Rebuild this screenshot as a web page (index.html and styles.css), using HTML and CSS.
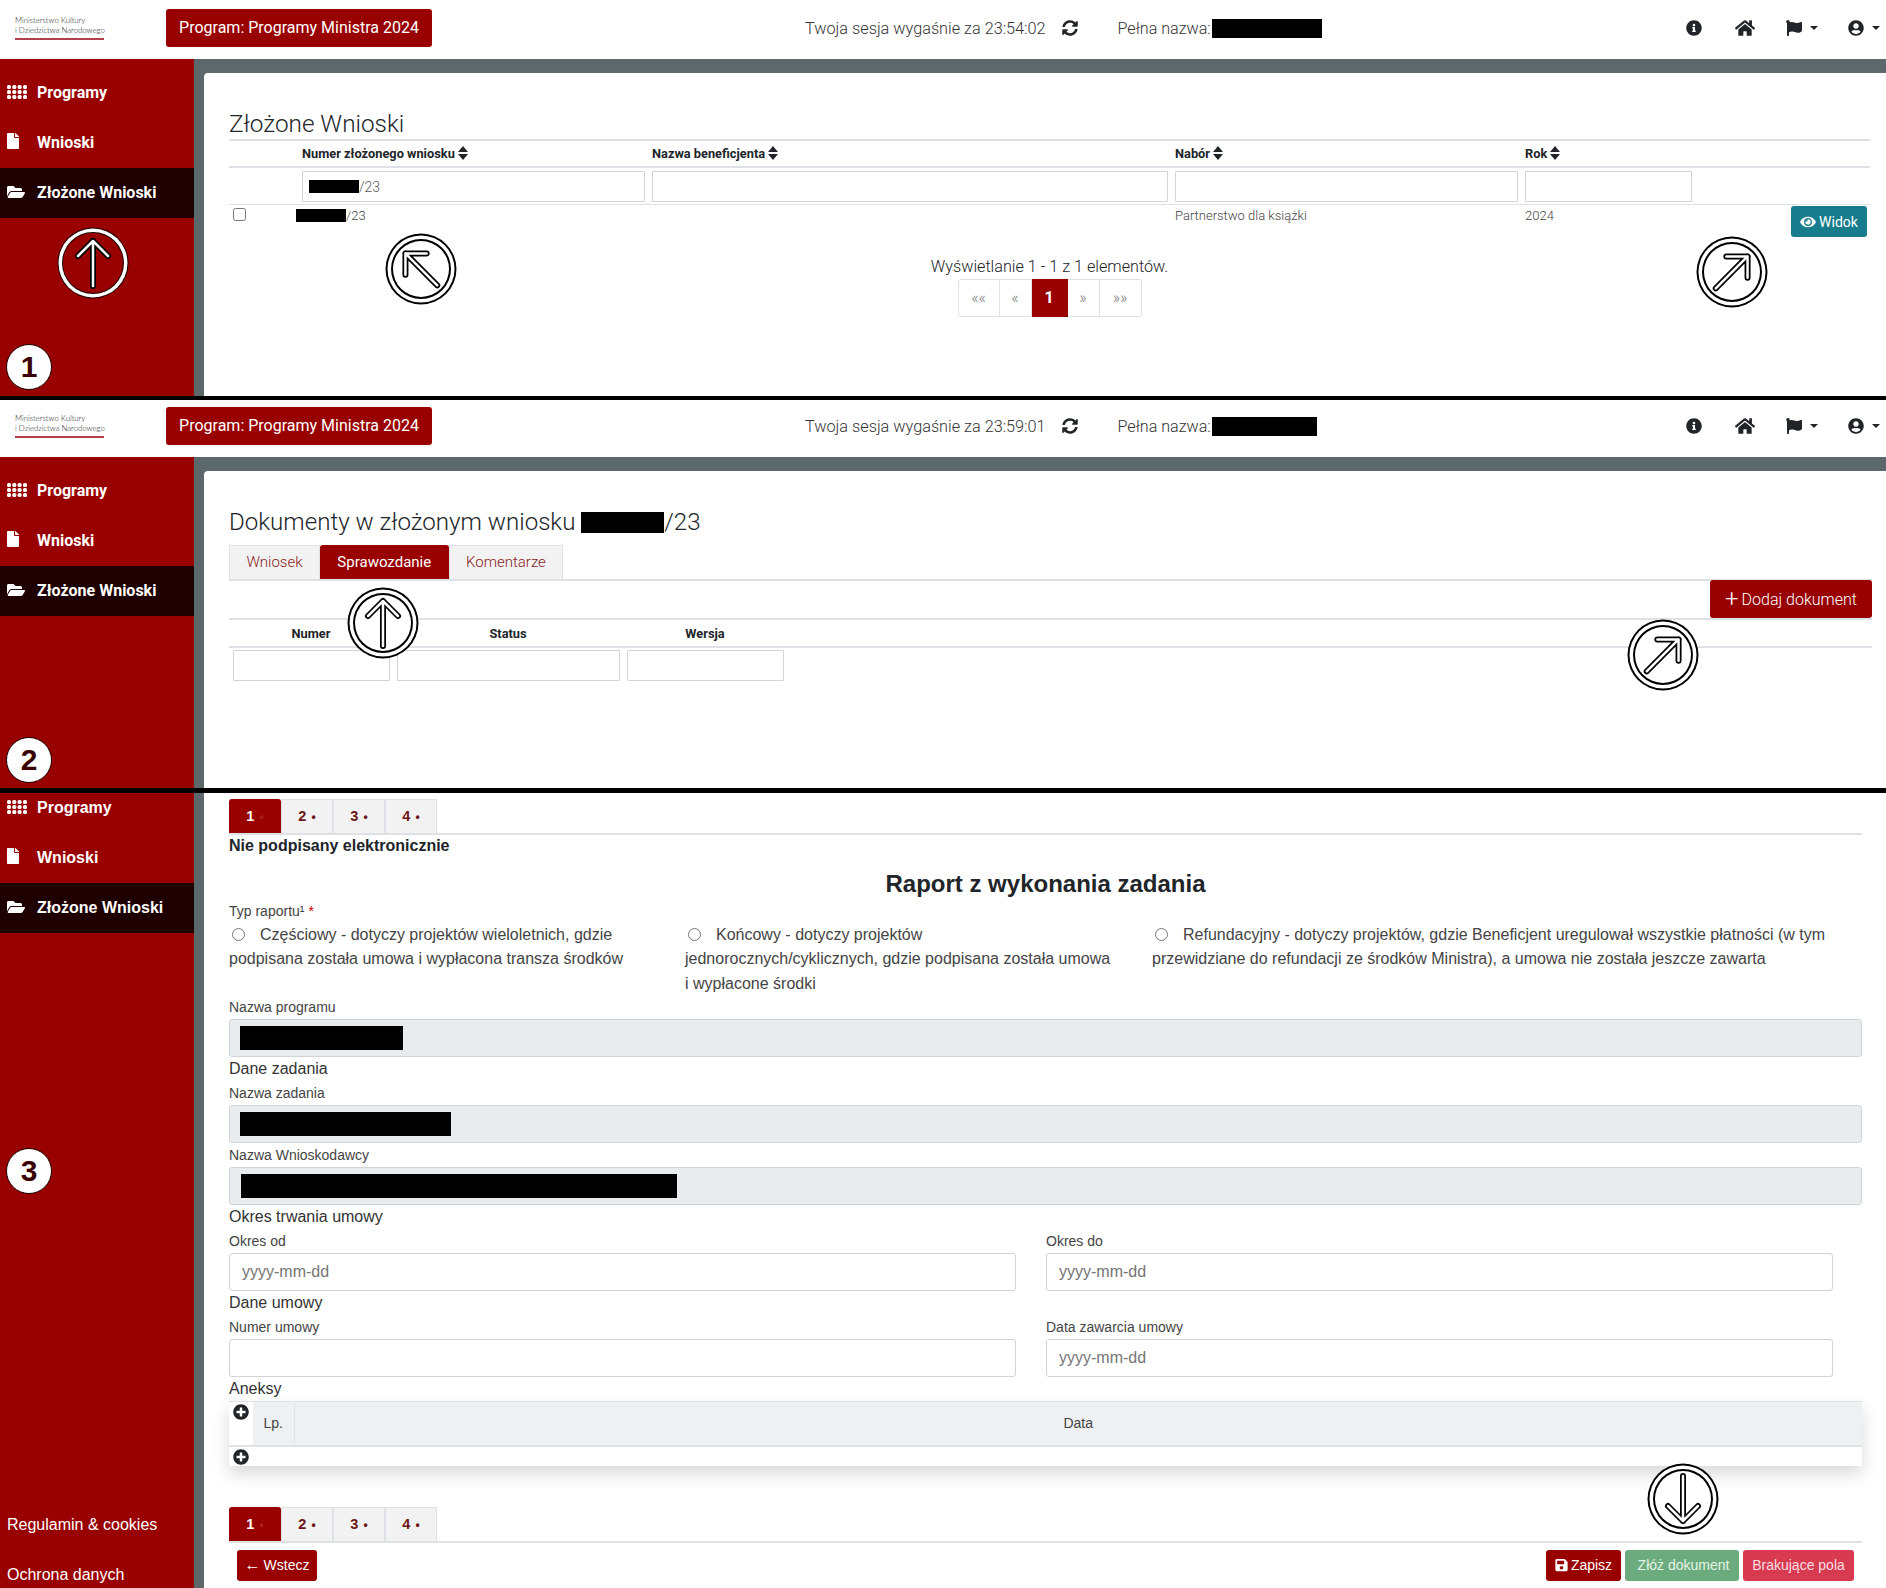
FILE: index.html
```html
<!DOCTYPE html>
<html lang="pl">
  <head>
    <meta charset="UTF-8" />
    <meta name="viewport" content="width=device-width, initial-scale=1.0" />
    <title>Złożone Wnioski</title>
    <link rel="stylesheet" href="styles.css">
  </head>
  <body>
    <svg class="icon-defs" aria-hidden="true">
      <symbol id="i-grid" viewBox="0 0 20 14">
        <g fill="currentColor">
          <rect x="0" y="0" width="4" height="4" rx="1.500" /><rect x="5.300" y="0" width="4" height="4" rx="1.500" /><rect x="10.600" y="0" width="4" height="4" rx="1.500" /><rect x="16" y="0" width="4" height="4" rx="1.500" />
          <rect x="0" y="5" width="4" height="4" rx="1.500" /><rect x="5.300" y="5" width="4" height="4" rx="1.500" /><rect x="10.600" y="5" width="4" height="4" rx="1.500" /><rect x="16" y="5" width="4" height="4" rx="1.500" />
          <rect x="0" y="10" width="4" height="4" rx="1.500" /><rect x="5.300" y="10" width="4" height="4" rx="1.500" /><rect x="10.600" y="10" width="4" height="4" rx="1.500" /><rect x="16" y="10" width="4" height="4" rx="1.500" />
        </g>
      </symbol>
      <symbol id="i-file" viewBox="0 0 384 512">
        <path fill="currentColor" d="M224 136V0H24C10.700 0 0 10.700 0 24v464c0 13.300 10.700 24 24 24h336c13.300 0 24-10.700 24-24V160H248c-13.200 0-24-10.800-24-24zm160-14.100v6.100H256V0h6.100c6.400 0 12.500 2.500 17 7l97.900 98c4.500 4.500 7 10.600 7 16.900z" />
      </symbol>
      <symbol id="i-folder" viewBox="0 0 576 512">
        <path fill="currentColor" d="M572.694 292.093L500.270 416.248A63.997 63.997 0 0 1 444.989 448H45.025c-18.523 0-30.064-20.093-20.731-36.093l72.424-124.155A64 64 0 0 1 152 256h399.964c18.523 0 30.064 20.093 20.730 36.093zM152 224h328v-48c0-26.510-21.490-48-48-48H272l-64-64H48C21.490 64 0 85.490 0 112v278.046l69.077-118.418C86.214 242.250 117.989 224 152 224z" />
      </symbol>
      <symbol id="i-sort" viewBox="0 0 10 14">
        <path fill="currentColor" d="M5 0l5 6H0zM5 14l-5-6h10z" />
      </symbol>
      <symbol id="i-sync" viewBox="0 0 512 512">
        <path fill="currentColor" d="M370.720 133.280C339.458 104.008 298.888 87.962 255.848 88c-77.458.068-144.328 53.178-162.791 126.850-1.344 5.363-6.122 9.150-11.651 9.150H24.103c-7.498 0-13.194-6.807-11.807-14.176C33.933 94.924 134.813 8 256 8c66.448 0 126.791 26.136 171.315 68.685L463.030 40.970C478.149 25.851 504 36.559 504 57.941V192c0 13.255-10.745 24-24 24H345.941c-21.382 0-32.090-25.851-16.971-40.971l41.750-41.749zM32 296h134.059c21.382 0 32.090 25.851 16.971 40.971l-41.750 41.750c31.262 29.273 71.835 45.319 114.876 45.280 77.418-.07 144.315-53.144 162.787-126.849 1.344-5.363 6.122-9.150 11.651-9.150h57.304c7.498 0 13.194 6.807 11.807 14.176C478.067 417.076 377.187 504 256 504c-66.448 0-126.791-26.136-171.315-68.685L48.970 471.030C33.851 486.149 8 475.441 8 454.059V320c0-13.255 10.745-24 24-24z" />
      </symbol>
      <symbol id="i-info" viewBox="0 0 512 512">
        <path fill="currentColor" d="M256 8C119.043 8 8 119.083 8 256c0 136.997 111.043 248 248 248s248-111.003 248-248C504 119.083 392.957 8 256 8zm0 110c23.196 0 42 18.804 42 42s-18.804 42-42 42-42-18.804-42-42 18.804-42 42-42zm56 254c0 6.627-5.373 12-12 12h-88c-6.627 0-12-5.373-12-12v-24c0-6.627 5.373-12 12-12h12v-64h-12c-6.627 0-12-5.373-12-12v-24c0-6.627 5.373-12 12-12h64c6.627 0 12 5.373 12 12v100h12c6.627 0 12 5.373 12 12v24z" />
      </symbol>
      <symbol id="i-home" viewBox="0 0 576 512">
        <path fill="currentColor" d="M280.370 148.260L96 300.110V464a16 16 0 0 0 16 16l112.060-.29a16 16 0 0 0 15.920-16V368a16 16 0 0 1 16-16h64a16 16 0 0 1 16 16v95.640a16 16 0 0 0 16 16.050L464 480a16 16 0 0 0 16-16V300L295.670 148.260a12.190 12.190 0 0 0-15.300 0zM571.600 251.470L488 182.560V44.050a12 12 0 0 0-12-12h-56a12 12 0 0 0-12 12v72.610L318.470 43a48 48 0 0 0-61 0L4.340 251.470a12 12 0 0 0-1.600 16.900l25.500 31A12 12 0 0 0 45.150 301l235.220-193.740a12.190 12.190 0 0 1 15.300 0L530.900 301a12 12 0 0 0 16.900-1.600l25.500-31a12 12 0 0 0-1.700-16.930z" />
      </symbol>
      <symbol id="i-flag" viewBox="0 0 512 512">
        <path fill="currentColor" d="M349.565 98.783C295.978 98.783 251.721 64 184.348 64c-24.955 0-47.309 4.384-68.045 12.013a55.947 55.947 0 0 0 3.586-23.562C118.117 24.015 94.806 1.206 66.338.048 34.345-1.254 8 24.296 8 56c0 19.026 9.497 35.825 24 45.945V488c0 13.255 10.745 24 24 24h16c13.255 0 24-10.745 24-24v-94.400c28.311-12.064 63.582-22.122 114.435-22.122 53.588 0 97.844 34.783 165.217 34.783 48.169 0 86.667-16.294 122.505-40.858C506.840 359.452 512 349.571 512 339.045v-243.100c0-23.393-24.269-38.870-45.485-29.016-34.338 15.948-76.454 31.854-116.950 31.854z" />
      </symbol>
      <symbol id="i-user" viewBox="0 0 496 512">
        <path fill="currentColor" fill-rule="evenodd" d="M248 8C111 8 0 119 0 256s111 248 248 248 248-111 248-248S385 8 248 8zm0 96c48.600 0 88 39.400 88 88s-39.400 88-88 88-88-39.400-88-88 39.400-88 88-88zm0 344c-58.700 0-111.300-26.600-146.500-68.200 18.800-35.400 55.600-59.800 98.500-59.800 2.400 0 4.800.4 7.100 1.100 13 4.200 26.600 6.900 40.900 6.900 14.300 0 28-2.700 40.900-6.900 2.300-.7 4.700-1.100 7.100-1.100 42.900 0 79.700 24.400 98.500 59.800C359.300 421.400 306.700 448 248 448z" />
      </symbol>
      <symbol id="i-eye" viewBox="0 0 576 512">
        <path fill="currentColor" d="M572.520 241.400C518.290 135.590 410.930 64 288 64S57.680 135.640 3.480 241.410a32.350 32.350 0 0 0 0 29.190C57.710 376.410 165.070 448 288 448s230.320-71.640 284.520-177.410a32.350 32.350 0 0 0 0-29.190zM288 400a144 144 0 1 1 144-144 143.930 143.930 0 0 1-144 144zm0-240a95.310 95.310 0 0 0-25.310 3.790 47.850 47.850 0 0 1-66.900 66.900A95.780 95.780 0 1 0 288 160z" />
      </symbol>
      <symbol id="i-save" viewBox="0 0 448 512">
        <path fill="currentColor" d="M433.941 129.941l-83.882-83.882A48 48 0 0 0 316.118 32H48C21.490 32 0 53.490 0 80v352c0 26.510 21.490 48 48 48h352c26.510 0 48-21.490 48-48V163.882a48 48 0 0 0-14.059-33.941zM224 416c-35.346 0-64-28.654-64-64 0-35.346 28.654-64 64-64s64 28.654 64 64c0 35.346-28.654 64-64 64zm96-304.520V212c0 6.627-5.373 12-12 12H76c-6.627 0-12-5.373-12-12V108c0-6.627 5.373-12 12-12h228.520c3.183 0 6.235 1.264 8.485 3.515l3.480 3.480A11.996 11.996 0 0 1 320 111.480z" />
      </symbol>
      <symbol id="i-plus-circle" viewBox="0 0 512 512">
        <path fill="currentColor" d="M256 8C119 8 8 119 8 256s111 248 248 248 248-111 248-248S393 8 256 8zm144 276c0 6.600-5.400 12-12 12h-92v92c0 6.600-5.400 12-12 12h-56c-6.600 0-12-5.400-12-12v-92h-92c-6.600 0-12-5.400-12-12v-56c0-6.600 5.400-12 12-12h92v-92c0-6.600 5.400-12 12-12h56c6.600 0 12 5.400 12 12v92h92c6.600 0 12 5.400 12 12v56z" />
      </symbol>
      <symbol id="i-mark" viewBox="0 0 72 72">
        <path class="mark-edge" d="M36 59V14M21 29l15-15 15 15" />
        <path class="mark-core" d="M36 59V14M21 29l15-15 15 15" />
      </symbol>
    </svg>

    <!-- 1: lista zlozonych wnioskow -->
    <section class="panel panel-one">
      <header class="topbar">
        <div class="logo">
          <div>Ministerstwo Kultury</div>
          <div>i Dziedzictwa Narodowego</div>
        </div>
        <a class="program-btn">Program: Programy Ministra 2024</a>
        <div class="session">Twoja sesja wygaśnie za 23:54:02</div>
        <svg class="sync-icon"><use href="#i-sync" /></svg>
        <div class="username">Pełna nazwa:<span class="redact redact-name"></span></div>
        <nav class="topnav">
          <svg class="nav-icon"><use href="#i-info" /></svg>
          <svg class="nav-icon nav-home"><use href="#i-home" /></svg>
          <svg class="nav-icon nav-flag"><use href="#i-flag" /></svg>
          <span class="caret"></span>
          <svg class="nav-icon nav-user"><use href="#i-user" /></svg>
          <span class="caret"></span>
        </nav>
      </header>
      <div class="panel-body">
        <aside class="sidebar">
          <a class="side-item"><svg class="side-icon"><use href="#i-grid" /></svg>Programy</a>
          <a class="side-item"><svg class="side-icon side-file"><use href="#i-file" /></svg>Wnioski</a>
          <a class="side-item active"><svg class="side-icon side-folder"><use href="#i-folder" /></svg>Złożone Wnioski</a>
        </aside>
        <main class="gutter">
          <div class="card card-list">
            <h1 class="page-title">Złożone Wnioski</h1>
            <table class="grid-table list-table">
              <thead>
                <tr>
                  <th class="col-check"></th>
                  <th class="col-num">Numer złożonego wniosku <svg class="sort-icon"><use href="#i-sort" /></svg></th>
                  <th class="col-name">Nazwa beneficjenta <svg class="sort-icon"><use href="#i-sort" /></svg></th>
                  <th class="col-call">Nabór <svg class="sort-icon"><use href="#i-sort" /></svg></th>
                  <th class="col-year">Rok <svg class="sort-icon"><use href="#i-sort" /></svg></th>
                  <th></th>
                </tr>
              </thead>
              <tbody>
                <tr class="filter-row">
                  <td></td>
                  <td><div class="filter filter-value"><span class="redact redact-num"></span>/23</div></td>
                  <td><div class="filter"></div></td>
                  <td><div class="filter"></div></td>
                  <td><div class="filter"></div></td>
                  <td></td>
                </tr>
                <tr class="data-row">
                  <td><input class="row-check" type="checkbox" /></td>
                  <td><span class="redact redact-num row-num"></span>/23</td>
                  <td></td>
                  <td>Partnerstwo dla książki</td>
                  <td>2024</td>
                  <td class="cell-action"><a class="btn btn-teal"><svg class="btn-icon"><use href="#i-eye" /></svg>Widok</a></td>
                </tr>
              </tbody>
            </table>
            <p class="pager-info">Wyświetlanie 1 - 1 z 1 elementów.</p>
            <div class="pager">
              <a class="pager-item pager-wide">««</a>
              <a class="pager-item">«</a>
              <a class="pager-item current">1</a>
              <a class="pager-item">»</a>
              <a class="pager-item pager-wide">»»</a>
            </div>
          </div>
        </main>
      </div>
      <svg class="mark mark-sidebar mark-1a" viewBox="0 0 72 72">
        <circle cx="36" cy="36" r="35.500" fill="#1a0000" />
        <circle cx="36" cy="36" r="34.500" fill="#fff" />
        <circle cx="36" cy="36" r="31" fill="#1a0000" />
        <circle cx="36" cy="36" r="30" fill="#990000" />
        <use href="#i-mark" />
      </svg>
      <svg class="mark mark-up-left mark-1b" viewBox="0 0 72 72">
        <circle cx="36" cy="36" r="35.500" />
        <circle class="mark-gap" cx="36" cy="36" r="33.500" />
        <circle cx="36" cy="36" r="30" />
        <circle class="mark-gap" cx="36" cy="36" r="28" />
        <use href="#i-mark" />
      </svg>
      <svg class="mark mark-up-right mark-1c" viewBox="0 0 72 72">
        <circle cx="36" cy="36" r="35.500" />
        <circle class="mark-gap" cx="36" cy="36" r="33.500" />
        <circle cx="36" cy="36" r="30" />
        <circle class="mark-gap" cx="36" cy="36" r="28" />
        <use href="#i-mark" />
      </svg>
      <span class="step-badge step-1">1</span>
    </section>

    <!-- 2: dokumenty we wniosku -->
    <section class="panel panel-two">
      <header class="topbar">
        <div class="logo">
          <div>Ministerstwo Kultury</div>
          <div>i Dziedzictwa Narodowego</div>
        </div>
        <a class="program-btn">Program: Programy Ministra 2024</a>
        <div class="session">Twoja sesja wygaśnie za 23:59:01</div>
        <svg class="sync-icon"><use href="#i-sync" /></svg>
        <div class="username">Pełna nazwa:<span class="redact redact-name-short"></span></div>
        <nav class="topnav">
          <svg class="nav-icon"><use href="#i-info" /></svg>
          <svg class="nav-icon nav-home"><use href="#i-home" /></svg>
          <svg class="nav-icon nav-flag"><use href="#i-flag" /></svg>
          <span class="caret"></span>
          <svg class="nav-icon nav-user"><use href="#i-user" /></svg>
          <span class="caret"></span>
        </nav>
      </header>
      <div class="panel-body">
        <aside class="sidebar">
          <a class="side-item"><svg class="side-icon"><use href="#i-grid" /></svg>Programy</a>
          <a class="side-item"><svg class="side-icon side-file"><use href="#i-file" /></svg>Wnioski</a>
          <a class="side-item active"><svg class="side-icon side-folder"><use href="#i-folder" /></svg>Złożone Wnioski</a>
        </aside>
        <main class="gutter">
          <div class="card card-docs">
            <h1 class="page-title">Dokumenty w złożonym wniosku <span class="redact redact-title"></span>/23</h1>
            <ul class="tabs text-tabs">
              <li class="tab">Wniosek</li>
              <li class="tab active">Sprawozdanie</li>
              <li class="tab">Komentarze</li>
            </ul>
            <div class="docs-toolbar">
              <a class="btn btn-red btn-add"><span class="btn-plus">+</span>Dodaj dokument</a>
            </div>
            <table class="grid-table docs-table">
              <thead>
                <tr>
                  <th class="col-docnum">Numer</th>
                  <th class="col-status">Status</th>
                  <th class="col-version">Wersja</th>
                  <th></th>
                </tr>
              </thead>
              <tbody>
                <tr class="filter-row">
                  <td><div class="filter"></div></td>
                  <td><div class="filter"></div></td>
                  <td><div class="filter"></div></td>
                  <td></td>
                </tr>
              </tbody>
            </table>
          </div>
        </main>
      </div>
      <svg class="mark mark-2a" viewBox="0 0 72 72">
        <circle cx="36" cy="36" r="35.500" />
        <circle class="mark-gap" cx="36" cy="36" r="33.500" />
        <circle cx="36" cy="36" r="30" />
        <circle class="mark-gap" cx="36" cy="36" r="28" />
        <use href="#i-mark" />
      </svg>
      <svg class="mark mark-up-right mark-2b" viewBox="0 0 72 72">
        <circle cx="36" cy="36" r="35.500" />
        <circle class="mark-gap" cx="36" cy="36" r="33.500" />
        <circle cx="36" cy="36" r="30" />
        <circle class="mark-gap" cx="36" cy="36" r="28" />
        <use href="#i-mark" />
      </svg>
      <span class="step-badge step-2">2</span>
    </section>

    <!-- 3: formularz raportu -->
    <section class="panel panel-three">
      <div class="panel-body">
        <aside class="sidebar">
          <a class="side-item"><svg class="side-icon"><use href="#i-grid" /></svg>Programy</a>
          <a class="side-item"><svg class="side-icon side-file"><use href="#i-file" /></svg>Wnioski</a>
          <a class="side-item active"><svg class="side-icon side-folder"><use href="#i-folder" /></svg>Złożone Wnioski</a>
          <a class="side-item side-link side-first-link">Regulamin &amp; cookies</a>
          <a class="side-item side-link">Ochrona danych</a>
        </aside>
        <main class="gutter">
          <div class="card card-form">
            <ul class="tabs step-tabs">
              <li class="tab active">1<span class="tab-dot">•</span></li>
              <li class="tab">2<span class="tab-dot">•</span></li>
              <li class="tab">3<span class="tab-dot">•</span></li>
              <li class="tab">4<span class="tab-dot">•</span></li>
            </ul>
            <div class="sign-note">Nie podpisany elektronicznie</div>
            <h2 class="form-title">Raport z wykonania zadania</h2>
            <div class="field-label">Typ raportu¹ <span class="required">*</span></div>
            <div class="radio-row">
              <label class="radio-col radio-a"><input type="radio" name="typ" />Częściowy - dotyczy projektów wieloletnich, gdzie podpisana została umowa i wypłacona transza środków</label>
              <label class="radio-col radio-b"><input type="radio" name="typ" />Końcowy - dotyczy projektów jednorocznych/cyklicznych, gdzie podpisana została umowa i wypłacone środki</label>
              <label class="radio-col radio-c"><input type="radio" name="typ" />Refundacyjny - dotyczy projektów, gdzie Beneficjent uregulował wszystkie płatności (w tym przewidziane do refundacji ze środków Ministra), a umowa nie została jeszcze zawarta</label>
            </div>

            <div class="field-label">Nazwa programu</div>
            <div class="readonly"><span class="redact redact-program"></span></div>
            <div class="section-label">Dane zadania</div>
            <div class="field-label">Nazwa zadania</div>
            <div class="readonly"><span class="redact redact-task"></span></div>
            <div class="field-label">Nazwa Wnioskodawcy</div>
            <div class="readonly"><span class="redact redact-applicant"></span></div>

            <div class="section-label">Okres trwania umowy</div>
            <div class="form-row">
              <div class="form-col">
                <div class="field-label">Okres od</div>
                <input class="text-input" type="text" placeholder="yyyy-mm-dd" />
              </div>
              <div class="form-col">
                <div class="field-label">Okres do</div>
                <input class="text-input" type="text" placeholder="yyyy-mm-dd" />
              </div>
            </div>
            <div class="section-label">Dane umowy</div>
            <div class="form-row">
              <div class="form-col">
                <div class="field-label">Numer umowy</div>
                <input class="text-input" type="text" />
              </div>
              <div class="form-col">
                <div class="field-label">Data zawarcia umowy</div>
                <input class="text-input" type="text" placeholder="yyyy-mm-dd" />
              </div>
            </div>

            <div class="section-label">Aneksy</div>
            <table class="annex-table">
              <thead>
                <tr>
                  <th class="annex-add"><svg class="plus-icon"><use href="#i-plus-circle" /></svg></th>
                  <th class="annex-lp">Lp.</th>
                  <th>Data</th>
                </tr>
              </thead>
              <tbody>
                <tr>
                  <td class="annex-add"><svg class="plus-icon"><use href="#i-plus-circle" /></svg></td>
                  <td colspan="2"></td>
                </tr>
              </tbody>
            </table>

            <ul class="tabs step-tabs step-tabs-bottom">
              <li class="tab active">1<span class="tab-dot">•</span></li>
              <li class="tab">2<span class="tab-dot">•</span></li>
              <li class="tab">3<span class="tab-dot">•</span></li>
              <li class="tab">4<span class="tab-dot">•</span></li>
            </ul>
            <div class="form-actions">
              <a class="btn btn-red btn-small btn-back"><span class="btn-arrow">←</span>Wstecz</a>
              <div class="action-group">
                <a class="btn btn-red btn-small btn-save"><svg class="btn-icon"><use href="#i-save" /></svg>Zapisz</a>
                <a class="btn btn-green btn-small btn-submit">Złóż dokument</a>
                <a class="btn btn-pink btn-small btn-missing">Brakujące pola</a>
              </div>
            </div>
          </div>
        </main>
      </div>
      <svg class="mark mark-down mark-3a" viewBox="0 0 72 72">
        <circle cx="36" cy="36" r="35.500" />
        <circle class="mark-gap" cx="36" cy="36" r="33.500" />
        <circle cx="36" cy="36" r="30" />
        <circle class="mark-gap" cx="36" cy="36" r="28" />
        <use href="#i-mark" />
      </svg>
      <span class="step-badge step-3">3</span>
    </section>
  </body>
</html>
```

FILE: styles.css
```css
* {
  box-sizing: border-box;
}
html,
body {
  margin: 0;
  height: 1588px;
  overflow: hidden;
}
body {
  font-family: Roboto, "Liberation Sans", sans-serif;
  font-size: 16px;
  color: #212529;
  background: #fff;
}
a {
  text-decoration: none;
}
.icon-defs {
  position: absolute;
  width: 0;
  height: 0;
}

/* panels */
.panel {
  position: relative;
  display: flex;
  flex-direction: column;
  overflow: hidden;
}
.panel-one {
  height: 400px;
  border-bottom: 4px solid #000;
}
.panel-two {
  height: 393px;
  border-bottom: 5px solid #000;
}
.panel-three {
  height: 795px;
  font-family: "Liberation Sans", Arial, sans-serif;
}
.panel-body {
  flex: 1;
  display: flex;
  min-height: 0;
}

/* top bar */
.topbar {
  flex: none;
  display: flex;
  align-items: center;
  height: 59px;
  padding: 9px 0 12px 15px;
  background: #fff;
  font-weight: 300;
}
.panel-two .topbar {
  height: 57px;
  padding-top: 7px;
}
.logo {
  width: 151px;
  padding-bottom: 7px;
  font-family: Lato, sans-serif;
  font-size: 7.800px;
  line-height: 10px;
  color: #222;
  position: relative;
}
.logo::after {
  content: "";
  position: absolute;
  left: 0;
  top: 23px;
  width: 89px;
  height: 2px;
  background: #b0404c;
}
.program-btn {
  width: 266px;
  height: 38px;
  line-height: 37px;
  text-align: center;
  background: #990000;
  border-radius: 3px;
  color: #fff;
  font-weight: 400;
  font-size: 16px;
}
.session {
  margin-left: 373px;
  font-size: 16.250px;
  color: #333;
}
.sync-icon {
  width: 16px;
  height: 16px;
  margin-left: 16px;
  color: #212529;
}
.username {
  display: flex;
  align-items: center;
  margin-left: 40px;
  font-size: 16.100px;
  color: #333;
}
.username .redact {
  margin-left: 1px;
}
.topnav {
  margin-left: auto;
  padding-right: 6px;
  display: flex;
  align-items: center;
  color: #212529;
}
.nav-icon {
  width: 16px;
  height: 16px;
}
.nav-home {
  width: 20px;
  height: 18px;
  margin-left: 33px;
}
.nav-flag {
  margin-left: 31px;
}
.nav-user {
  margin-left: 30px;
}
.caret {
  width: 0;
  height: 0;
  margin-left: 8px;
  border-top: 4px solid #212529;
  border-left: 4px solid transparent;
  border-right: 4px solid transparent;
}

/* redactions */
.redact {
  display: inline-block;
  background: #000;
}
.redact-name {
  width: 110px;
  height: 19px;
}
.redact-name-short {
  width: 105px;
  height: 19px;
}
.redact-num {
  width: 50px;
  height: 13px;
}
.row-num {
  margin-left: -6px;
  vertical-align: -2px;
}
.redact-title {
  width: 83px;
  height: 21px;
  vertical-align: -3px;
}
.redact-program {
  width: 163px;
  height: 24px;
}
.redact-task {
  width: 211px;
  height: 24px;
}
.redact-applicant {
  width: 436px;
  height: 24px;
  margin-left: 1px;
}

/* sidebar */
.sidebar {
  flex: none;
  width: 194px;
  padding-top: 9px;
  display: flex;
  flex-direction: column;
  background: #990000;
}
.panel-three .sidebar {
  padding-top: 0;
  margin-top: -10px;
  margin-bottom: -12px;
}
.side-item {
  flex: none;
  display: flex;
  align-items: center;
  height: 50px;
  padding-bottom: 2px;
  color: #fff;
  font-weight: 700;
  font-size: 16px;
  padding-left: 37px;
  position: relative;
}
.panel-three .side-item {
  padding-bottom: 0;
}
.side-item.active {
  background: #1f0000;
}
.side-icon {
  position: absolute;
  left: 7px;
  top: 17px;
  width: 20px;
  height: 14px;
  color: #fff;
}
.side-file {
  width: 12px;
  height: 16px;
  top: 15px;
}
.side-folder {
  width: 18px;
  height: 16px;
  top: 16px;
}
.side-link {
  padding-left: 7px;
  font-weight: 400;
}
.side-first-link {
  margin-top: auto;
}

/* content */
.gutter {
  flex: 1;
  display: flex;
  min-width: 0;
  padding: 14px 0 0 10px;
  background: #5c686c;
}
.panel-three .gutter {
  padding-top: 0;
}
.card {
  flex: 1;
  min-width: 0;
  background: #fff;
  border-top-left-radius: 4px;
}
.card-list {
  padding: 36px 16px 0 25px;
}
.card-docs {
  padding: 36px 14px 0 25px;
}
.card-form {
  padding: 6px 24px 0 25px;
  border-radius: 0;
}
.page-title {
  margin: 0;
  font-size: 24.300px;
  font-weight: 300;
  line-height: 30px;
}
.card-docs .page-title {
  font-size: 24.100px;
}

/* tables */
.grid-table {
  width: 100%;
  border-collapse: collapse;
  table-layout: fixed;
  border-top: 2px solid #dee2e6;
  font-size: 12.800px;
  font-weight: 300;
}
.grid-table th {
  height: 27px;
  padding: 0 3px;
  font-weight: 700;
  text-align: left;
  border-bottom: 2px solid #dee2e6;
}
.grid-table td {
  padding: 0 4px 0 3px;
  vertical-align: top;
}
.col-check {
  width: 70px;
}
.col-num {
  width: 350px;
}
.col-name {
  width: 523px;
}
.col-call {
  width: 350px;
}
.col-year {
  width: 174px;
}
.sort-icon {
  width: 10px;
  height: 14px;
  vertical-align: -2px;
  color: #212529;
}
.filter-row td {
  padding-top: 3px;
  padding-bottom: 2px;
}
.list-table .filter-row td {
  border-bottom: 1px solid #dee2e6;
}
.filter {
  height: 31px;
  background: #fff;
  border: 1px solid #ced4da;
  border-radius: 1px;
}
.filter-value {
  display: flex;
  align-items: center;
  padding-left: 6px;
  padding-right: 4px;
  font-size: 14px;
  color: #555;
}
.data-row td {
  height: 36px;
  padding-top: 4px;
  line-height: 14px;
  font-size: 13px;
  color: #444;
}
.row-check {
  margin: -1px 0 0 1px;
  width: 13px;
  height: 13px;
  display: block;
}
.data-row .cell-action {
  padding: 1px 3px 0 0;
  text-align: right;
}
.pager-info {
  margin: 14px 0 0;
  text-align: center;
  font-size: 16.200px;
  font-weight: 300;
  line-height: 24px;
}
.pager {
  display: flex;
  justify-content: center;
}
.pager-item {
  width: 32px;
  height: 38px;
  border: 1px solid #dee2e6;
  border-left: 0;
  display: flex;
  align-items: center;
  justify-content: center;
  font-size: 16px;
  font-weight: 300;
  color: #777;
}
.pager-wide {
  width: 42px;
}
.pager-item:first-child {
  border-left: 1px solid #dee2e6;
  border-radius: 3px 0 0 3px;
}
.pager-item:last-child {
  border-radius: 0 3px 3px 0;
}
.pager-item.current {
  width: 36px;
  background: #990000;
  border-color: #990000;
  color: #fff;
  font-size: 16px;
  font-weight: 700;
}

/* tabs */
.tabs {
  display: flex;
  margin: 0;
  padding: 0;
  list-style: none;
  border-bottom: 2px solid #dee2e6;
}
.tab {
  height: 34px;
  line-height: 33px;
  background: #f2f2f2;
  border: 1px solid #dee2e6;
  border-bottom: 0;
  color: #8a1c1c;
  text-align: center;
}
.tab.active {
  background: #990000;
  border-color: #990000;
  border-radius: 3px 3px 0 0;
  color: #fff;
}
.text-tabs {
  margin-top: 8px;
  font-size: 15px;
  font-weight: 300;
}
.text-tabs .tab {
  padding: 0 16.400px;
}
.text-tabs .tab.active {
  font-weight: 400;
}
.step-tabs .tab {
  width: 52px;
  font-size: 14.500px;
  font-weight: 700;
  color: #6d1414;
}
.step-tabs .tab.active {
  color: #fff;
}
.step-tabs-bottom {
  margin-top: 41px;
}
.tab-dot {
  margin-left: 5px;
  font-size: 12px;
}
.tab.active .tab-dot {
  color: #a82020;
}

/* documents */
.docs-toolbar {
  display: flex;
  justify-content: flex-end;
  height: 37px;
}
.docs-table th {
  height: 28px;
  text-align: center;
}
.col-docnum {
  width: 164px;
}
.col-status {
  width: 230px;
}
.col-version {
  width: 164px;
}
.docs-table .filter-row td {
  padding: 2px 3px 0 4px;
}

/* buttons */
.btn {
  display: inline-flex;
  align-items: center;
  justify-content: center;
  border-radius: 3px;
  color: #fff;
  font-size: 14px;
}
.btn-icon {
  width: 16px;
  height: 14px;
  margin-right: 3px;
}
.btn-teal {
  width: 76px;
  height: 31px;
  background: #177d8c;
  font-weight: 400;
}
.btn-red {
  background: #990000;
}
.btn-add {
  width: 162px;
  height: 38px;
  margin-top: -1px;
  font-size: 16px;
  font-weight: 300;
}
.btn-plus {
  margin-right: 3px;
  font-size: 24px;
  line-height: 20px;
}
.btn-small {
  height: 31px;
}
.btn-back {
  width: 80px;
}
.btn-save {
  width: 75px;
}
.btn-save .btn-icon {
  width: 13px;
  margin-right: 3px;
}
.btn-submit {
  width: 114px;
  padding-left: 3px;
}
.btn-missing {
  width: 111px;
}
.btn-arrow {
  margin-right: 3px;
  font-size: 16px;
}
.btn-green {
  background: #6bab7d;
  color: #e4f4e6;
}
.btn-pink {
  background: #d83a4f;
  color: #f8dfe2;
}

/* form */
.sign-note {
  height: 22px;
  line-height: 22px;
  font-weight: 700;
  font-size: 16px;
}
.form-title {
  margin: 12px 0 0;
  text-align: center;
  font-size: 24px;
  line-height: 30px;
}
.field-label {
  height: 22px;
  line-height: 24px;
  font-size: 14px;
  color: #444;
}
.required {
  color: #c00;
}
.radio-row {
  display: flex;
  margin-top: 2px;
  height: 72px;
  line-height: 24.300px;
  color: #444;
}
.radio-col input {
  margin: 0 15px 0 3px;
  width: 13px;
  height: 13px;
  vertical-align: -1px;
}
.radio-a {
  width: 456px;
}
.radio-b {
  width: 467px;
  padding-right: 38px;
}
.radio-c {
  width: 680px;
}
.readonly {
  height: 38px;
  margin-top: 2px;
  padding: 6px 0 0 10px;
  background: #e9ecef;
  border: 1px solid #ced4da;
  border-radius: 3px;
}
.section-label {
  height: 24px;
  line-height: 24px;
  color: #333;
}
.form-row {
  display: flex;
  gap: 30px;
}
.form-col {
  width: 787px;
}
.text-input {
  display: block;
  width: 100%;
  height: 38px;
  margin-top: 2px;
  padding: 0 12px;
  border: 1px solid #ced4da;
  border-radius: 3px;
  font-family: inherit;
  font-size: 16px;
  color: #333;
}
.annex-table {
  width: 100%;
  border-collapse: collapse;
  table-layout: fixed;
  font-size: 14px;
  box-shadow: 0 8px 16px rgba(0, 0, 0, 0.15);
}
.annex-table th {
  height: 44px;
  font-weight: 400;
  color: #444;
  background: #eff0f2;
  border-top: 1px solid #dee2e6;
  border-bottom: 2px solid #dee2e6;
}
.annex-table td {
  height: 20px;
  padding: 0;
}
.annex-table .annex-add {
  width: 24px;
  padding: 2px 0 0 4px;
  background: #fff;
  vertical-align: top;
  text-align: left;
}
.annex-table .annex-lp {
  width: 41px;
  border-right: 1px solid #e2e4e8;
}
.plus-icon {
  display: block;
  width: 16px;
  height: 16px;
  color: #212529;
}
.form-actions {
  display: flex;
  justify-content: space-between;
  margin-top: 7px;
  padding: 0 8px;
}
.action-group {
  display: flex;
  gap: 4px;
}

/* annotation marks over the screenshot */
.mark {
  position: absolute;
  width: 72px;
  height: 72px;
  fill: #000;
}
.mark-gap {
  fill: #fff;
}
.mark-edge,
.mark-core {
  fill: none;
  stroke-linecap: round;
  stroke-linejoin: round;
}
.mark-edge {
  stroke: #000;
  stroke-width: 6;
}
.mark-core {
  stroke: #fff;
  stroke-width: 2.500;
}
.mark-sidebar .mark-edge {
  stroke: #3a0000;
  stroke-width: 5;
}
.mark-sidebar .mark-core {
  stroke-width: 3.500;
}
.mark-up-left {
  transform: rotate(-45deg);
}
.mark-up-right {
  transform: rotate(45deg);
}
.mark-down {
  transform: rotate(180deg);
}
.mark-1a {
  left: 57px;
  top: 227px;
}
.mark-1b {
  left: 385px;
  top: 233px;
}
.mark-1c {
  left: 1696px;
  top: 236px;
}
.mark-2a {
  left: 347px;
  top: 187px;
}
.mark-2b {
  left: 1627px;
  top: 219px;
}
.mark-3a {
  left: 1647px;
  top: 670px;
}
.step-badge {
  position: absolute;
  width: 46px;
  height: 46px;
  border-radius: 50%;
  background: #fff;
  border: 1.500px solid #1a0000;
  color: #3a0000;
  font-family: "Liberation Sans", Arial, sans-serif;
  font-weight: 700;
  font-size: 30px;
  line-height: 43px;
  text-align: center;
}
.step-1 {
  left: 6px;
  top: 344px;
}
.step-2 {
  left: 6px;
  top: 337px;
}
.step-3 {
  left: 6px;
  top: 355px;
}
```
